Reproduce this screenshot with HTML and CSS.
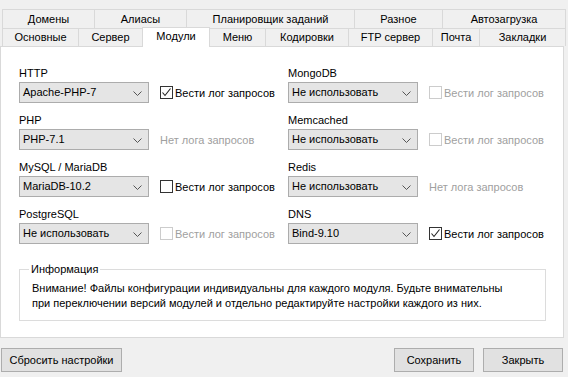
FILE: index.html
```html
<!DOCTYPE html>
<html lang="ru">
<head>
    <meta charset="utf-8">
    <title>Настройки - Модули</title>
    <link rel="stylesheet" href="styles.css">
</head>
<body>
    <div class="window">
        <div class="tabs">
            <div class="tab-row row-top">
                <div class="tab">Домены</div>
                <div class="tab">Алиасы</div>
                <div class="tab">Планировщик заданий</div>
                <div class="tab">Разное</div>
                <div class="tab">Автозагрузка</div>
            </div>
            <div class="tab-row row-bottom">
                <div class="tab">Основные</div>
                <div class="tab">Сервер</div>
                <div class="tab active">Модули</div>
                <div class="tab">Меню</div>
                <div class="tab">Кодировки</div>
                <div class="tab">FTP сервер</div>
                <div class="tab">Почта</div>
                <div class="tab">Закладки</div>
            </div>
        </div>

        <div class="panel">
            <div class="modules">
                <div class="field">
                    <div class="label">HTTP</div>
                    <div class="line">
                        <div class="select">Apache-PHP-7<svg class="chev" width="9" height="5" viewBox="0 0 9 5"><polyline points="0.5,0.5 4.5,4.5 8.5,0.5" fill="none" stroke="#555" stroke-width="1"/></svg></div>
                        <label class="check"><span class="box checked"><svg width="11" height="11" viewBox="0 0 11 11"><polyline points="1.5,5.5 4,8.5 9.5,1.5" fill="none" stroke="#222" stroke-width="1.1"/></svg></span>Вести лог запросов</label>
                    </div>
                </div>
                <div class="field">
                    <div class="label">MongoDB</div>
                    <div class="line">
                        <div class="select">Не использовать<svg class="chev" width="9" height="5" viewBox="0 0 9 5"><polyline points="0.5,0.5 4.5,4.5 8.5,0.5" fill="none" stroke="#555" stroke-width="1"/></svg></div>
                        <label class="check disabled"><span class="box"></span>Вести лог запросов</label>
                    </div>
                </div>

                <div class="field">
                    <div class="label">PHP</div>
                    <div class="line">
                        <div class="select">PHP-7.1<svg class="chev" width="9" height="5" viewBox="0 0 9 5"><polyline points="0.5,0.5 4.5,4.5 8.5,0.5" fill="none" stroke="#555" stroke-width="1"/></svg></div>
                        <span class="nolog">Нет лога запросов</span>
                    </div>
                </div>
                <div class="field">
                    <div class="label">Memcached</div>
                    <div class="line">
                        <div class="select">Не использовать<svg class="chev" width="9" height="5" viewBox="0 0 9 5"><polyline points="0.5,0.5 4.5,4.5 8.5,0.5" fill="none" stroke="#555" stroke-width="1"/></svg></div>
                        <label class="check disabled"><span class="box"></span>Вести лог запросов</label>
                    </div>
                </div>

                <div class="field">
                    <div class="label">MySQL / MariaDB</div>
                    <div class="line">
                        <div class="select">MariaDB-10.2<svg class="chev" width="9" height="5" viewBox="0 0 9 5"><polyline points="0.5,0.5 4.5,4.5 8.5,0.5" fill="none" stroke="#555" stroke-width="1"/></svg></div>
                        <label class="check"><span class="box"></span>Вести лог запросов</label>
                    </div>
                </div>
                <div class="field">
                    <div class="label">Redis</div>
                    <div class="line">
                        <div class="select">Не использовать<svg class="chev" width="9" height="5" viewBox="0 0 9 5"><polyline points="0.5,0.5 4.5,4.5 8.5,0.5" fill="none" stroke="#555" stroke-width="1"/></svg></div>
                        <span class="nolog">Нет лога запросов</span>
                    </div>
                </div>

                <div class="field">
                    <div class="label">PostgreSQL</div>
                    <div class="line">
                        <div class="select">Не использовать<svg class="chev" width="9" height="5" viewBox="0 0 9 5"><polyline points="0.5,0.5 4.5,4.5 8.5,0.5" fill="none" stroke="#555" stroke-width="1"/></svg></div>
                        <label class="check disabled"><span class="box"></span>Вести лог запросов</label>
                    </div>
                </div>
                <div class="field">
                    <div class="label">DNS</div>
                    <div class="line">
                        <div class="select">Bind-9.10<svg class="chev" width="9" height="5" viewBox="0 0 9 5"><polyline points="0.5,0.5 4.5,4.5 8.5,0.5" fill="none" stroke="#555" stroke-width="1"/></svg></div>
                        <label class="check"><span class="box checked"><svg width="11" height="11" viewBox="0 0 11 11"><polyline points="1.5,5.5 4,8.5 9.5,1.5" fill="none" stroke="#222" stroke-width="1.1"/></svg></span>Вести лог запросов</label>
                    </div>
                </div>
            </div>

            <fieldset class="info">
                <legend>Информация</legend>
                <p>Внимание! Файлы конфигурации индивидуальны для каждого модуля. Будьте внимательны<br>при переключении версий модулей и отдельно редактируйте настройки каждого из них.</p>
            </fieldset>
        </div>

        <div class="footer">
            <button class="btn btn-reset">Сбросить настройки</button>
            <div class="spacer"></div>
            <button class="btn">Сохранить</button>
            <button class="btn">Закрыть</button>
        </div>
    </div>
</body>
</html>
```

FILE: styles.css
```css
body {
    margin: 0;
    background: #f0f0f0;
    font-family: "Liberation Sans", Arial, sans-serif;
    font-size: 11px;
    color: #000000;
}

.window {
    width: 568px;
    height: 377px;
    overflow: hidden;
}

/* tabs */

.tabs {
    padding: 9px 0 0 2px;
}

.tab-row {
    display: flex;
    width: 564px;
}

.tab {
    box-sizing: border-box;
    border-top: 1px solid #d9d9d9;
    border-left: 1px solid #d9d9d9;
    background: #f0f0f0;
    text-align: center;
    white-space: nowrap;
}

.tab:last-child {
    border-right: 1px solid #d9d9d9;
}

.row-top .tab {
    height: 19px;
    line-height: 19px;
}

.row-bottom .tab {
    height: 18px;
    line-height: 17px;
}

.row-top .tab:nth-child(1) { width: 92px; }
.row-top .tab:nth-child(2) { width: 92px; }
.row-top .tab:nth-child(3) { width: 168px; }
.row-top .tab:nth-child(4) { width: 88px; }
.row-top .tab:nth-child(5) { width: 124px; }

.row-bottom .tab:nth-child(1) { width: 76px; }
.row-bottom .tab:nth-child(2) { width: 64px; }
.row-bottom .tab:nth-child(3) { width: 68px; }
.row-bottom .tab:nth-child(4) { width: 55px; }
.row-bottom .tab:nth-child(5) { width: 83px; }
.row-bottom .tab:nth-child(6) { width: 84px; }
.row-bottom .tab:nth-child(7) { width: 47px; }
.row-bottom .tab:nth-child(8) { width: 87px; }

.row-bottom .tab.active {
    position: relative;
    z-index: 1;
    height: 20px;
    margin: -1px 0 -1px 0;
    line-height: 17px;
    background: #ffffff;
    border-right: 1px solid #d9d9d9;
}

.row-bottom .tab.active + .tab {
    border-left: 0;
}

/* panel */

.panel {
    box-sizing: border-box;
    width: 564px;
    height: 292px;
    background: #ffffff;
    border: 1px solid #d9d9d9;
    padding: 19px 0 0 18px;
}

.modules {
    display: grid;
    grid-template-columns: 269px 269px;
    row-gap: 10px;
}

.label {
    height: 15px;
    line-height: 15px;
    margin-bottom: 1px;
}

.line {
    display: flex;
    align-items: center;
    height: 21px;
}

.select {
    box-sizing: border-box;
    position: relative;
    width: 130px;
    height: 21px;
    line-height: 19px;
    padding-left: 3px;
    background: #e5e5e5;
    border: 1px solid #acacac;
}

.chev {
    position: absolute;
    right: 6px;
    top: 8px;
}

.check {
    display: flex;
    align-items: center;
    margin-left: 11px;
}

.box {
    box-sizing: border-box;
    width: 13px;
    height: 13px;
    margin-right: 2px;
    border: 1px solid #333333;
    background: #ffffff;
    display: flex;
    align-items: center;
    justify-content: center;
}

.check.disabled {
    color: #a0a0a0;
}

.check.disabled .box {
    border-color: #cccccc;
}

.nolog {
    margin-left: 11px;
    color: #a0a0a0;
}

/* info */

.info {
    width: 527px;
    box-sizing: border-box;
    height: 59px;
    margin: 18px 0 0 0;
    padding: 0;
    border: 1px solid #dcdcdc;
}

.info legend {
    padding: 0 2px;
    margin-left: 9px;
    line-height: 14px;
}

.info p {
    margin: 0;
    padding: 5px 0 0 12px;
    line-height: 15px;
}

/* footer */

.footer {
    display: flex;
    padding: 10px 5px 0 1px;
}

.spacer {
    flex: 1;
}

.btn {
    height: 24px;
    width: 80px;
    margin-left: 9px;
    padding: 0;
    background: #e1e1e1;
    border: 1px solid #adadad;
    font-family: "Liberation Sans", Arial, sans-serif;
    font-size: 11px;
    color: #000000;
}

.btn-reset {
    width: 121px;
    margin-left: 0;
}
```
